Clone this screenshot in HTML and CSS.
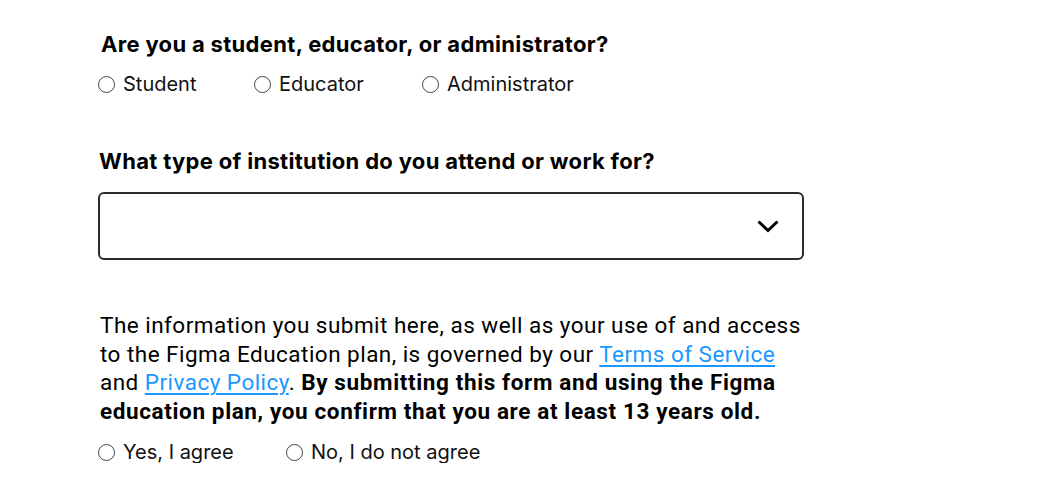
FILE: index.html
```html
<!DOCTYPE html>
<html>
<head>
<meta charset="utf-8">
<link rel="stylesheet" href="styles.css">
</head>
<body>
<form class="form">
  <fieldset class="group">
    <legend class="question q1">Are you a student, educator, or administrator?</legend>
    <div class="options">
      <label class="option opt-student"><span class="radio"></span>Student</label>
      <label class="option opt-educator"><span class="radio"></span>Educator</label>
      <label class="option"><span class="radio"></span>Administrator</label>
    </div>
  </fieldset>

  <div class="group group-select">
    <div class="question q2">What type of institution do you attend or work for?</div>
    <div class="select">
      <svg class="chevron" width="24" height="16" viewBox="0 0 24 16"><path d="M2.5 3.5 L12 12.5 L21.5 3.5" fill="none" stroke="#000" stroke-width="3"/></svg>
    </div>
  </div>

  <p class="legal">The information you submit here, as well as your use of and access to the Figma Education plan, is governed by our <a href="#">Terms of Service</a> and <a href="#">Privacy Policy</a>. <strong>By submitting this form and using the Figma education plan, you confirm that you are at least 13 years old.</strong></p>

  <div class="options options-agree">
    <label class="option opt-yes"><span class="radio"></span>Yes, I agree</label>
    <label class="option"><span class="radio"></span>No, I do not agree</label>
  </div>
</form>
</body>
</html>
```

FILE: styles.css
```css
html, body {
  margin: 0;
  padding: 0;
  background: #fff;
}
body {
  font-family: "Roboto", "Liberation Sans", sans-serif;
  color: #000;
}
.form {
  width: 706px;
  padding: 29px 0 0 98px;
  display: flex;
  flex-direction: column;
}
.group {
  border: 0;
  margin: 0;
  padding: 0;
  min-width: 0;
}
.question {
  font-family: "Inter", "Liberation Sans", sans-serif;
  font-weight: 700;
  font-size: 22px;
  line-height: 30px;
  letter-spacing: 0.32px;
  padding: 0;
}
.q1 {
  padding-left: 3px;
}
.q2 {
  padding-left: 1px;
}
.options {
  display: flex;
  align-items: center;
  height: 22px;
  margin-top: 14px;
}
.option {
  display: flex;
  align-items: center;
  font-family: "Inter", "Liberation Sans", sans-serif;
  font-size: 20px;
  line-height: 22px;
  letter-spacing: 0;
  color: #111;
}
.opt-student { width: 156px; }
.opt-educator { width: 168px; }
.opt-yes { width: 188px; }
.radio {
  width: 17px;
  height: 17px;
  border: 1.5px solid #444;
  border-radius: 50%;
  box-sizing: border-box;
  margin-right: 8px;
  flex: none;
}
.group-select {
  margin-top: 51px;
}
.select {
  margin-top: 16px;
  height: 68px;
  border: 2px solid #2c2c2c;
  border-radius: 6px;
  box-sizing: border-box;
  display: flex;
  align-items: center;
  justify-content: flex-end;
  padding-right: 22px;
}
.chevron {
  display: block;
}
.legal {
  margin: 51px 0 0 2px;
  font-size: 22.5px;
  line-height: 28.5px;
  letter-spacing: 0.47px;
  color: #000;
}
.legal a {
  color: #1a98ff;
  text-decoration: underline;
  text-decoration-thickness: 1.5px;
  text-underline-offset: 3px;
}
.legal strong {
  font-weight: 700;
  letter-spacing: 0.62px;
}
.options-agree {
  margin-top: 16px;
}
```
